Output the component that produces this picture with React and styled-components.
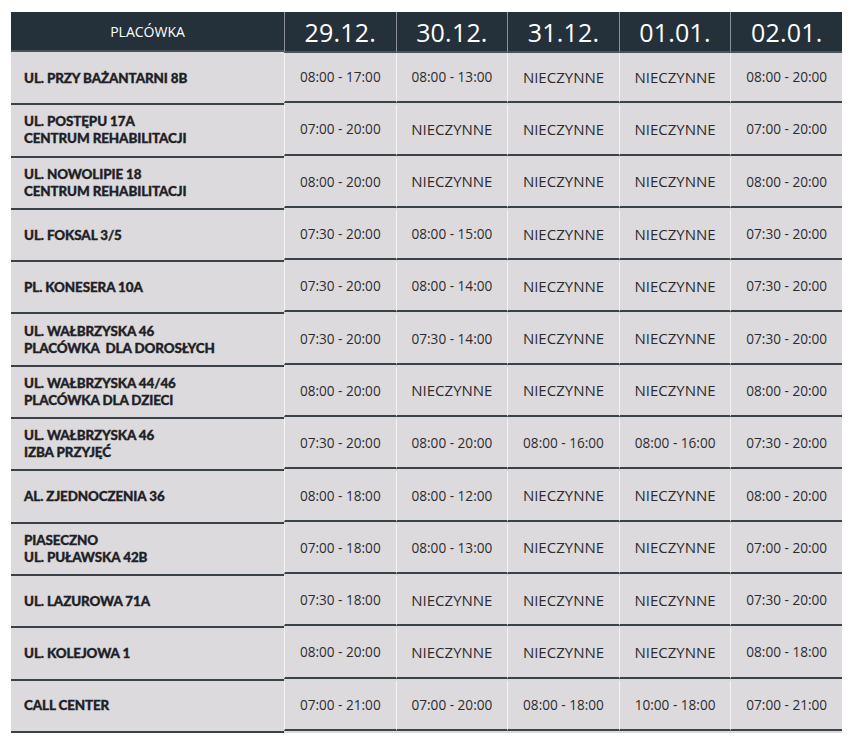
import React from "react";
import styled, { createGlobalStyle } from "styled-components";

const GlobalStyle = createGlobalStyle`
  body {
    margin: 0;
    background: #fff;
  }
`;

const Page = styled.div`
  padding: 12px 0 0 11px;
`;

const Table = styled.div`
  display: grid;
  grid-template-columns: 273px repeat(5, 111.6px);
  width: 831px;
  background: #dcdadd;
`;

const HeadCell = styled.div`
  height: 38px;
  background: #25313a;
  color: #fff;
  display: flex;
  align-items: center;
  justify-content: center;
  border-left: ${(p) => (p.$first ? "none" : "1px solid #8a9096")};
  border-bottom: 2px solid #4a525a;
  font-family: "Open Sans", "Noto Sans", sans-serif;
  font-size: ${(p) => (p.$date ? "25px" : "14px")};
  letter-spacing: ${(p) => (p.$date ? "0.2px" : "0")};
  padding-top: ${(p) => (p.$date ? "1px" : "0")};
`;

const NameCell = styled.div`
  height: 50.3px;
  display: flex;
  flex-direction: column;
  justify-content: center;
  padding-left: 13px;
  border-bottom: 2px solid #3b4148;
  font-family: Lato, sans-serif;
  font-weight: 900;
  font-size: 13.4px;
  line-height: 17px;
  color: #1f1f26;
  letter-spacing: -0.1px;
  -webkit-text-stroke: 0.35px #1f1f26;
`;

const Cell = styled.div`
  height: 50.3px;
  display: flex;
  align-items: center;
  justify-content: center;
  padding-bottom: 1px;
  box-sizing: border-box;
  border-left: 1px solid #f4f3f5;
  border-bottom: 2px solid #3b4148;
  font-family: "Open Sans", sans-serif;
  font-size: ${(p) => (p.$closed ? "15px" : "13.6px")};
  color: #2c2c2f;
`;

const dates = ["29.12.", "30.12.", "31.12.", "01.01.", "02.01."];

const N = "NIECZYNNE";

const rows = [
  [["UL. PRZY BAŻANTARNI 8B"], ["08:00 - 17:00", "08:00 - 13:00", N, N, "08:00 - 20:00"]],
  [["UL. POSTĘPU 17A", "CENTRUM REHABILITACJI"], ["07:00 - 20:00", N, N, N, "07:00 - 20:00"]],
  [["UL. NOWOLIPIE 18", "CENTRUM REHABILITACJI"], ["08:00 - 20:00", N, N, N, "08:00 - 20:00"]],
  [["UL. FOKSAL 3/5"], ["07:30 - 20:00", "08:00 - 15:00", N, N, "07:30 - 20:00"]],
  [["PL. KONESERA 10A"], ["07:30 - 20:00", "08:00 - 14:00", N, N, "07:30 - 20:00"]],
  [["UL. WAŁBRZYSKA 46", "PLACÓWKA  DLA DOROSŁYCH"], ["07:30 - 20:00", "07:30 - 14:00", N, N, "07:30 - 20:00"]],
  [["UL. WAŁBRZYSKA 44/46", "PLACÓWKA DLA DZIECI"], ["08:00 - 20:00", N, N, N, "08:00 - 20:00"]],
  [["UL. WAŁBRZYSKA 46", "IZBA PRZYJĘĆ"], ["07:30 - 20:00", "08:00 - 20:00", "08:00 - 16:00", "08:00 - 16:00", "07:30 - 20:00"]],
  [["AL. ZJEDNOCZENIA 36"], ["08:00 - 18:00", "08:00 - 12:00", N, N, "08:00 - 20:00"]],
  [["PIASECZNO", "UL. PUŁAWSKA 42B"], ["07:00 - 18:00", "08:00 - 13:00", N, N, "07:00 - 20:00"]],
  [["UL. LAZUROWA 71A"], ["07:30 - 18:00", N, N, N, "07:30 - 20:00"]],
  [["UL. KOLEJOWA 1"], ["08:00 - 20:00", N, N, N, "08:00 - 18:00"]],
  [["CALL CENTER"], ["07:00 - 21:00", "07:00 - 20:00", "08:00 - 18:00", "10:00 - 18:00", "07:00 - 21:00"]],
];

export default function App() {
  return (
    <Page>
      <GlobalStyle />
      <Table>
        <HeadCell $first>PLACÓWKA</HeadCell>
        {dates.map((d) => (
          <HeadCell key={d} $date>
            {d}
          </HeadCell>
        ))}
        {rows.map(([name, hours], i) => (
          <React.Fragment key={i}>
            <NameCell>
              {name.map((line) => (
                <span key={line} style={{ whiteSpace: "pre" }}>
                  {line}
                </span>
              ))}
            </NameCell>
            {hours.map((h, j) => (
              <Cell key={j} $closed={h === N}>
                {h}
              </Cell>
            ))}
          </React.Fragment>
        ))}
      </Table>
    </Page>
  );
}
